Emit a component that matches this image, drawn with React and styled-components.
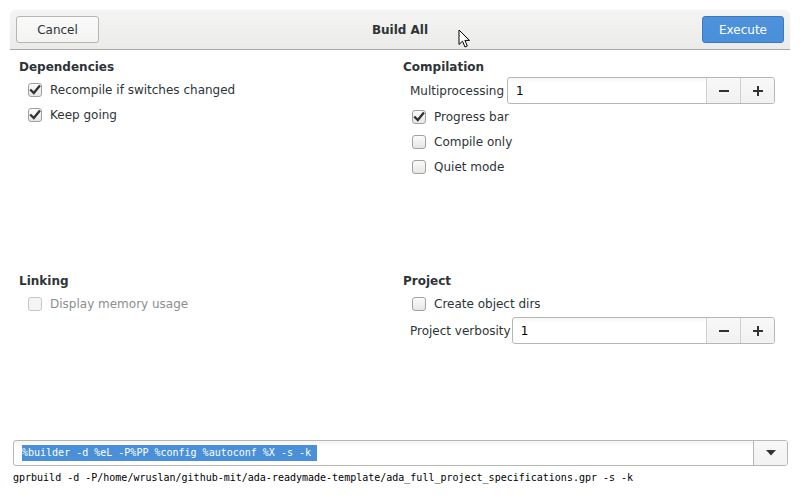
import React from "react";
import styled, { createGlobalStyle } from "styled-components";

const GlobalStyle = createGlobalStyle`
  body {
    margin: 0;
    background: #ffffff;
    font-family: "DejaVu Sans", "Noto Sans", sans-serif;
    font-size: 12px;
    color: #2e3436;
  }
`;

const Page = styled.div`
  position: relative;
  display: flex;
  flex-direction: column;
  height: 500px;
  width: 801px;
  overflow: hidden;
`;

const HeaderBar = styled.div`
  display: grid;
  grid-template-columns: 1fr auto 1fr;
  align-items: center;
  height: 39px;
  margin: 10px 11px 0 10px;
  padding: 0 6px;
  background: linear-gradient(to bottom, #f4f4f3, #ebebea);
  border-bottom: 1px solid #a8a8a6;
  border-radius: 6px 6px 0 0;
  box-shadow: 0 0 1px rgba(0, 0, 0, 0.12);
`;

const Title = styled.div`
  font-weight: bold;
  font-size: 12px;
  color: #2e3436;
`;

const Button = styled.button`
  justify-self: ${(p) => (p.end ? "end" : "start")};
  width: ${(p) => p.w}px;
  height: 27px;
  font-family: inherit;
  font-size: 12px;
  border-radius: 3px;
  border: 1px solid ${(p) => (p.primary ? "#3a79c2" : "#b6b6b3")};
  background: ${(p) =>
    p.primary
      ? "linear-gradient(to bottom, #4d92db, #4a8fd9)"
      : "linear-gradient(to bottom, #fafafa, #f3f3f2)"};
  color: ${(p) => (p.primary ? "#ffffff" : "#2e3436")};
  padding: 0;
`;

const Main = styled.div`
  display: grid;
  grid-template-columns: 384px 1fr;
  grid-template-rows: 214px auto;
  padding: 10px 26px 0 19px;
`;

const Section = styled.div`
  display: flex;
  flex-direction: column;
`;

const Heading = styled.div`
  font-weight: bold;
  line-height: 15px;
  height: 15px;
  margin-bottom: ${(p) => (p.tight ? 2 : 2)}px;
`;

const CheckRow = styled.label`
  display: flex;
  align-items: center;
  gap: 8px;
  height: 25px;
  padding-left: 9px;
  color: ${(p) => (p.disabled ? "#8b8e8f" : "#2e3436")};
`;

const Box = styled.span`
  display: inline-flex;
  align-items: center;
  justify-content: center;
  width: 14px;
  height: 14px;
  box-sizing: border-box;
  border-radius: 3px;
  border: 1px solid ${(p) => (p.disabled ? "#c6c6c4" : "#a1a19e")};
  background: ${(p) =>
    p.disabled
      ? "#f4f4f4"
      : "linear-gradient(to bottom, #fbfbfb, #e6e6e5)"};
`;

const SpinRow = styled.div`
  display: flex;
  align-items: center;
  gap: ${(p) => p.gap}px;
  padding-left: 7px;
  margin-top: ${(p) => p.mt || 0}px;
`;

const SpinBox = styled.div`
  flex: 1;
  display: flex;
  height: ${(p) => p.h}px;
  box-sizing: border-box;
  border: 1px solid #b6b6b3;
  border-radius: 3px;
  background: linear-gradient(to bottom, #f6f6f6, #ffffff 5px);
  overflow: hidden;
`;

const SpinValue = styled.div`
  flex: 1;
  display: flex;
  align-items: center;
  padding-left: 8px;
  color: #000000;
`;

const SpinButton = styled.div`
  width: ${(p) => p.w}px;
  display: flex;
  align-items: center;
  justify-content: center;
  border-left: 1px solid #cfcfcd;
  background: linear-gradient(to bottom, #f8f8f8, #f1f1f1);
`;

const Footer = styled.div`
  margin-top: auto;
  display: flex;
  flex-direction: column;
  gap: 5px;
  padding: 0 13px 15px 13px;
`;

const Combo = styled.div`
  display: flex;
  height: 26px;
  box-sizing: border-box;
  border: 1px solid #b6b6b3;
  border-radius: 3px;
  background: linear-gradient(to bottom, #f4f4f4, #ffffff 6px);
  overflow: hidden;
`;

const ComboEntry = styled.div`
  flex: 1;
  display: flex;
  align-items: center;
  padding-left: 8px;
`;

const Selected = styled.span`
  font-family: "DejaVu Sans Mono", "Liberation Mono", monospace;
  font-size: 10px;
  line-height: 16px;
  background: #4a90d9;
  color: #ffffff;
  white-space: pre;
`;

const ComboArrow = styled.div`
  width: 33px;
  display: flex;
  align-items: center;
  justify-content: center;
  border-left: 1px solid #b6b6b3;
  background: linear-gradient(to bottom, #f8f8f8, #f2f2f2);
`;

const Command = styled.div`
  font-family: "DejaVu Sans Mono", "Liberation Mono", monospace;
  font-size: 10px;
  line-height: 14px;
  color: #000000;
  white-space: pre;
`;

const Cursor = styled.svg`
  position: absolute;
  left: 458px;
  top: 29px;
`;

const Check = ({ checked, disabled, children }) => (
  <CheckRow disabled={disabled}>
    <Box disabled={disabled}>
      {checked && (
        <svg width="12" height="12" viewBox="0 0 12 12">
          <path
            d="M2 6.3 L4.8 9 L10.2 2.4"
            fill="none"
            stroke="#2e3436"
            strokeWidth="2.3"
            strokeLinecap="square"
          />
        </svg>
      )}
    </Box>
    {children}
  </CheckRow>
);

const Spin = ({ label, value, gap, h, mt }) => (
  <SpinRow gap={gap} mt={mt}>
    <span>{label}</span>
    <SpinBox h={h}>
      <SpinValue>{value}</SpinValue>
      <SpinButton w={33}>
        <svg width="12" height="12" viewBox="0 0 12 12">
          <rect x="1" y="5" width="10" height="2" fill="#2e3436" />
        </svg>
      </SpinButton>
      <SpinButton w={33}>
        <svg width="12" height="12" viewBox="0 0 12 12">
          <rect x="1" y="5" width="10" height="2" fill="#2e3436" />
          <rect x="5" y="1" width="2" height="10" fill="#2e3436" />
        </svg>
      </SpinButton>
    </SpinBox>
  </SpinRow>
);

export default function App() {
  return (
    <Page>
      <GlobalStyle />
      <HeaderBar>
        <Button w={83}>Cancel</Button>
        <Title>Build All</Title>
        <Button w={82} primary end>
          Execute
        </Button>
      </HeaderBar>

      <Main>
        <Section>
          <Heading>Dependencies</Heading>
          <Check checked>Recompile if switches changed</Check>
          <Check checked>Keep going</Check>
        </Section>
        <Section>
          <Heading tight>Compilation</Heading>
          <Spin label="Multiprocessing" value="1" gap={3} h={27} />
          <Check checked>Progress bar</Check>
          <Check>Compile only</Check>
          <Check>Quiet mode</Check>
        </Section>
        <Section>
          <Heading>Linking</Heading>
          <Check disabled>Display memory usage</Check>
        </Section>
        <Section>
          <Heading>Project</Heading>
          <Check>Create object dirs</Check>
          <Spin label="Project verbosity" value="1" gap={1} h={27} mt={1} />
        </Section>
      </Main>

      <Footer>
        <Combo>
          <ComboEntry>
            <Selected>%builder -d %eL -P%PP %config %autoconf %X -s -k </Selected>
          </ComboEntry>
          <ComboArrow>
            <svg width="10" height="6" viewBox="0 0 10 6">
              <path d="M0 0 H10 L5 5.5 Z" fill="#2e3436" />
            </svg>
          </ComboArrow>
        </Combo>
        <Command>
          gprbuild -d -P/home/wruslan/github-mit/ada-readymade-template/ada_full_project_specifications.gpr -s -k
        </Command>
      </Footer>

      <Cursor width="13" height="20" viewBox="0 0 13 20">
        <path
          d="M1 1 L1 15.5 L4.5 12.2 L7 18 L9.3 17 L6.9 11.4 L11.5 11.4 Z"
          fill="#ffffff"
          stroke="#000000"
          strokeWidth="1"
          strokeLinejoin="round"
        />
      </Cursor>
    </Page>
  );
}
